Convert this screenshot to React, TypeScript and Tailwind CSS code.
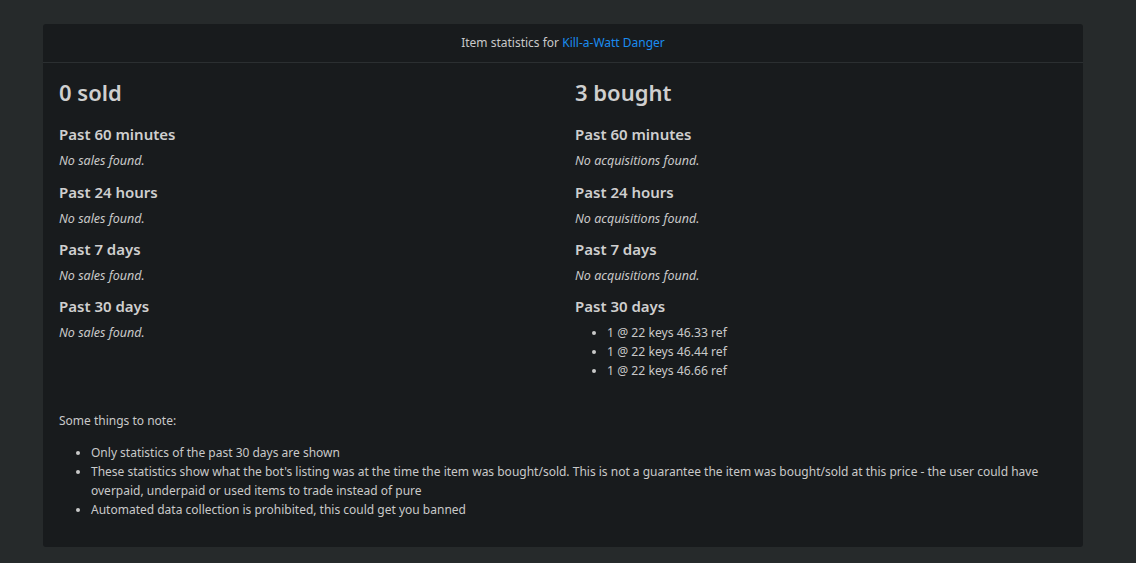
const font = { fontFamily: '"Noto Sans", "Open Sans", sans-serif' };

type Section = { label: string; empty?: string; items?: string[] };

const sold: Section[] = [
  { label: 'Past 60 minutes', empty: 'No sales found.' },
  { label: 'Past 24 hours', empty: 'No sales found.' },
  { label: 'Past 7 days', empty: 'No sales found.' },
  { label: 'Past 30 days', empty: 'No sales found.' },
];

const bought: Section[] = [
  { label: 'Past 60 minutes', empty: 'No acquisitions found.' },
  { label: 'Past 24 hours', empty: 'No acquisitions found.' },
  { label: 'Past 7 days', empty: 'No acquisitions found.' },
  {
    label: 'Past 30 days',
    items: ['1 @ 22 keys 46.33 ref', '1 @ 22 keys 46.44 ref', '1 @ 22 keys 46.66 ref'],
  },
];

const gaps = ['mt-[20px]', 'mt-[13px]', 'mt-[12px]', 'mt-[12px]'];

function Column({ title, sections }: { title: string; sections: Section[] }) {
  return (
    <div className="flex-1 px-3">
      <h3 className="text-[22px] leading-[26px] font-semibold text-[#cfcfcf]">{title}</h3>
      {sections.map((s, i) => (
        <div key={s.label} className={gaps[i]}>
          <h5 className="text-[15px] leading-[18px] font-semibold text-[#cfcfcf]">{s.label}</h5>
          {s.empty && (
            <p className="mt-[8px] text-[12.5px] leading-[19px] italic text-[#c9c9c9]">{s.empty}</p>
          )}
          {s.items && (
            <ul className="mt-[8px] pl-8 list-disc text-[12.2px] leading-[19px] text-[#c9c9c9]">
              {s.items.map((it) => (
                <li key={it}>{it}</li>
              ))}
            </ul>
          )}
        </div>
      ))}
    </div>
  );
}

export default function App() {
  return (
    <div className="min-h-[563px] bg-[#262a2b] pt-6 pb-[17px]" style={font}>
      <div className="ml-[43px] w-[1040px] rounded-[3px] bg-[#181b1d]">
        <div className="h-[39px] flex items-center justify-center border-b border-[#2b2f31] text-[12px] text-[#c9c9c9]">
          <span>
            Item statistics for{' '}
            <a className="text-[#1a8cf0]" href="#">
              Kill-a-Watt Danger
            </a>
          </span>
        </div>
        <div className="px-4 pt-4 pb-[28px]">
          <div className="flex -mx-3">
            <Column title="0 sold" sections={sold} />
            <Column title="3 bought" sections={bought} />
          </div>
          <p className="mt-[31px] text-[12px] leading-[19px] text-[#c9c9c9]">Some things to note:</p>
          <ul className="mt-[13px] pl-8 list-disc text-[12px] leading-[19px] text-[#c9c9c9]">
            <li>Only statistics of the past 30 days are shown</li>
            <li>
              These statistics show what the bot's listing was at the time the item was bought/sold. This is not a
              guarantee the item was bought/sold at this price - the user could have overpaid, underpaid or used
              items to trade instead of pure
            </li>
            <li>Automated data collection is prohibited, this could get you banned</li>
          </ul>
        </div>
      </div>
    </div>
  );
}
